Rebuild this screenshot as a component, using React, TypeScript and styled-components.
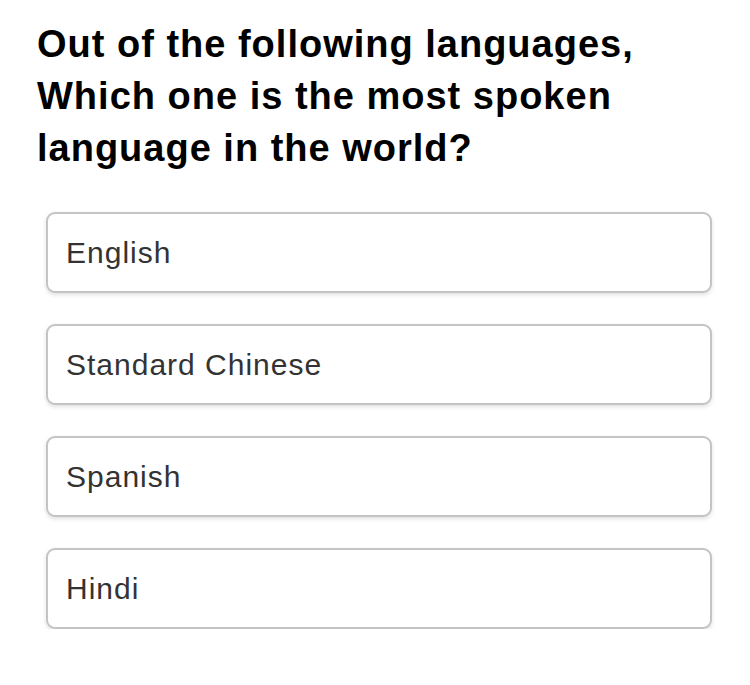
import React from 'react';
import styled, { createGlobalStyle } from 'styled-components';

const GlobalStyle = createGlobalStyle`
  body {
    margin: 0;
    background: #fff;
    font-family: 'Liberation Sans', Arial, Helvetica, sans-serif;
  }
`;

const Container = styled.div`
  padding: 18px 38px 0 37px;
`;

const Question = styled.h1`
  margin: 0;
  font-size: 38px;
  letter-spacing: 1px;
  line-height: 52px;
  font-weight: bold;
  color: #000;
`;

const OptionList = styled.div`
  display: flex;
  flex-direction: column;
  gap: 31px;
  margin-top: 38px;
  padding-left: 9px;
`;

const Option = styled.button`
  display: flex;
  align-items: center;
  height: 81px;
  padding: 0 0 0 18px;
  box-sizing: border-box;
  background: #fff;
  border: 2px solid #c4c4c4;
  border-radius: 9px;
  box-shadow: 0 2px 4px rgba(0, 0, 0, 0.12);
  font-family: inherit;
  font-size: 30px;
  letter-spacing: 1px;
  color: #333;
  text-align: left;
  cursor: pointer;
`;

const options = ['English', 'Standard Chinese', 'Spanish', 'Hindi'];

export default function App() {
  return (
    <>
      <GlobalStyle />
      <Container>
        <Question>
          Out of the following languages,
          <br />
          Which one is the most spoken
          <br />
          language in the world?
        </Question>
        <OptionList>
          {options.map((o) => (
            <Option key={o}>{o}</Option>
          ))}
        </OptionList>
      </Container>
    </>
  );
}
